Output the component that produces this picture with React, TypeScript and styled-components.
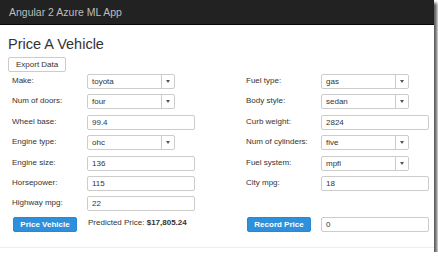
import React from 'react';
import styled, { createGlobalStyle } from 'styled-components';

const Global = createGlobalStyle`
  html, body { margin: 0; padding: 0; background: #fff; }
  body { font-family: "Liberation Sans", Arial, sans-serif; color: #333; }
`;

const Page = styled.div`
  width: 434px;
  height: 252px;
  background: #fff;
  box-shadow: 3px 3px 3px rgba(0, 0, 0, 0.65);
  display: flex;
  flex-direction: column;
  overflow: hidden;
`;

const Navbar = styled.header`
  height: 25px;
  box-sizing: border-box;
  background: #222;
  border-bottom: 1px solid #080808;
  display: flex;
  align-items: center;
  padding-left: 9px;
  color: #bdbdbd;
  font-size: 10.5px;
`;

const Content = styled.main`
  flex: 1;
  display: flex;
  flex-direction: column;
  align-items: flex-start;
  padding: 0 4px 0 8px;
`;

const Title = styled.h1`
  margin: 11px 0 0;
  font-size: 14.5px;
  line-height: 16px;
  font-weight: normal;
  color: #333;
`;

const Button = styled.button<{ $primary?: boolean }>`
  box-sizing: border-box;
  height: 15px;
  padding: 0 7px;
  border-radius: 2px;
  font-family: inherit;
  font-size: 8px;
  line-height: 13px;
  cursor: pointer;
  border: 1px solid ${p => (p.$primary ? '#2a88d3' : '#ccc')};
  background: ${p => (p.$primary ? '#2e8fdb' : '#fff')};
  color: ${p => (p.$primary ? '#fff' : '#333')};
  font-weight: ${p => (p.$primary ? 'bold' : 'normal')};
`;

const ExportButton = styled(Button)`
  margin-top: 5px;
`;

const ActionButton = styled(Button)`
  width: 64px;
  margin-left: 1px;
  padding: 0;
`;

const Form = styled.div`
  align-self: stretch;
  margin-top: 2px;
  padding-left: 4px;
  display: grid;
  grid-template-columns: 75px 159px 75px 1fr;
  grid-auto-rows: 15px;
  row-gap: 5.4px;
`;

const Label = styled.label`
  font-size: 8px;
  line-height: 10px;
  padding-top: 2px;
  color: #333;
`;

const Input = styled.div`
  box-sizing: border-box;
  width: 108px;
  height: 15px;
  border: 1px solid #ccc;
  border-radius: 2px;
  padding: 0 4px;
  font-size: 8px;
  line-height: 13px;
  color: #333;
`;

const SelectBox = styled.div`
  box-sizing: border-box;
  width: 88px;
  height: 15px;
  border: 1px solid #ccc;
  border-radius: 2px;
  display: flex;
  font-size: 8px;
  line-height: 13px;
  color: #333;
`;

const SelectValue = styled.span`
  flex: 1;
  padding-left: 4px;
`;

const SelectArrow = styled.span`
  width: 12px;
  border-left: 1px solid #ccc;
  display: flex;
  align-items: center;
  justify-content: center;
  &::after {
    content: '';
    border-left: 2px solid transparent;
    border-right: 2px solid transparent;
    border-top: 3px solid #555;
  }
`;

const Predicted = styled.div`
  font-size: 8px;
  line-height: 12px;
  padding-left: 1px;
  color: #333;
  b { font-weight: bold; }
`;

const Empty = styled.div``;

const Footer = styled.footer`
  height: 4px;
  border-top: 1px solid #eee;
`;

type Field = { label: string; value: string; select?: boolean };

const left: Field[] = [
  { label: 'Make:', value: 'toyota', select: true },
  { label: 'Num of doors:', value: 'four', select: true },
  { label: 'Wheel base:', value: '99.4' },
  { label: 'Engine type:', value: 'ohc', select: true },
  { label: 'Engine size:', value: '136' },
  { label: 'Horsepower:', value: '115' },
  { label: 'Highway mpg:', value: '22' },
];

const right: (Field | null)[] = [
  { label: 'Fuel type:', value: 'gas', select: true },
  { label: 'Body style:', value: 'sedan', select: true },
  { label: 'Curb weight:', value: '2824' },
  { label: 'Num of cylinders:', value: 'five', select: true },
  { label: 'Fuel system:', value: 'mpfi', select: true },
  { label: 'City mpg:', value: '18' },
  null,
];

const Control = ({ f }: { f: Field }) =>
  f.select ? (
    <SelectBox>
      <SelectValue>{f.value}</SelectValue>
      <SelectArrow />
    </SelectBox>
  ) : (
    <Input>{f.value}</Input>
  );

export default function App() {
  return (
    <>
      <Global />
      <Page>
        <Navbar>Angular 2 Azure ML App</Navbar>
        <Content>
          <Title>Price A Vehicle</Title>
          <ExportButton>Export Data</ExportButton>
          <Form>
            {left.map((l, i) => {
              const r = right[i];
              return (
                <React.Fragment key={l.label}>
                  <Label>{l.label}</Label>
                  <Control f={l} />
                  {r ? <Label>{r.label}</Label> : <Empty />}
                  {r ? <Control f={r} /> : <Empty />}
                </React.Fragment>
              );
            })}
            <ActionButton $primary>Price Vehicle</ActionButton>
            <Predicted>
              Predicted Price: <b>$17,805.24</b>
            </Predicted>
            <ActionButton $primary>Record Price</ActionButton>
            <Input>0</Input>
          </Form>
        </Content>
        <Footer />
      </Page>
    </>
  );
}
